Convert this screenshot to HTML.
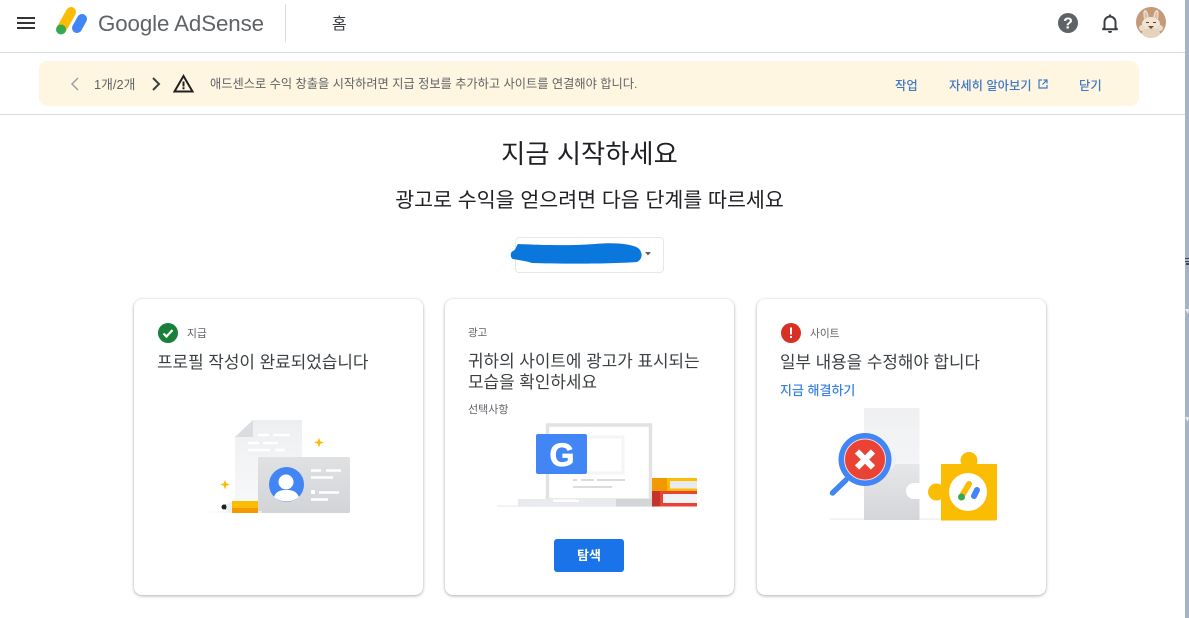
<!DOCTYPE html>
<html lang="ko"><head><meta charset="utf-8"><title>Google AdSense</title>
<style>
html,body{margin:0;padding:0;background:#fff}
body{width:1189px;height:618px;position:relative;overflow:hidden;font-family:"Liberation Sans","Noto Sans CJK KR",sans-serif;color:#3c4043;filter:blur(.3px)}
.a{position:absolute;white-space:nowrap}
.card{position:absolute;top:299px;width:289px;height:296px;background:#fff;border-radius:8px;box-shadow:0 1px 3px rgba(60,64,67,.4),0 0 1px rgba(60,64,67,.15)}
.link{color:#1a73e8;font-weight:500}
svg{position:absolute;overflow:visible}
</style></head><body>
<div class="a" style="left:1185px;top:0;width:4px;height:618px;background:#a3b4c8"></div>
<svg style="left:1185px;top:258px" width="4" height="170"><path d="M0 0h4v1H0zM0 3h4v1H0zM1 5h3v2H1z" fill="#3c4654"/><path d="M0 51h4L3 56zM0 159h4L3 164z" fill="#e8edf2"/></svg>
<div class="a" style="left:0;top:52px;width:1185px;height:1px;background:#dadce0"></div>
<div class="a" style="left:0;top:114px;width:1185px;height:1px;background:#dadce0"></div>
<svg style="left:17px;top:16px" width="18" height="14"><path d="M0 1h18v2H0zM0 6h18v2H0zM0 11h18v2H0z" fill="#333"/></svg>
<svg style="left:56px;top:7px" width="32" height="28" viewBox="0 0 32 28"><path d="M5.500 22 15 5" stroke="#fbbc04" stroke-width="10" stroke-linecap="round"/><path d="M21 21 26 12" stroke="#4285f4" stroke-width="10" stroke-linecap="round"/><circle cx="5" cy="22.500" r="5" fill="#34a853"/></svg>
<div class="a" style="left:98px;top:10px;font-size:22.300px;line-height:28px;color:#5f6368;letter-spacing:-.1px">Google AdSense</div>
<div class="a" style="left:285px;top:4px;width:1px;height:38px;background:#dadce0"></div>
<div class="a" style="left:332px;top:14px;font-size:16px;line-height:22px;color:#3c4043">홈</div>
<svg style="left:1058px;top:13px" width="20" height="20"><circle cx="10" cy="10" r="10" fill="#5f6368"/><text x="10" y="15.500" font-size="16" font-weight="700" text-anchor="middle" fill="#fff" font-family="Liberation Sans">?</text></svg>
<svg style="left:1101px;top:13px" width="18" height="20" viewBox="0 0 18 20"><path d="M3.500 15V9a5.500 5.500 0 0 1 11 0v6l1.500 1.200H2z" fill="none" stroke="#3c4043" stroke-width="2" stroke-linejoin="round"/><path d="M7 18h4a2 2 0 0 1-4 0zM8 1.500h2V4H8z" fill="#3c4043"/></svg>
<svg style="left:1136px;top:7px" width="30" height="30" viewBox="0 0 30 30"><circle cx="15" cy="15" r="15" fill="#c49a78"/><path d="M9 3c2.500 0 3.500 5 4 9H8C7 8 7 3 9 3zM21 3c-2.500 0-3.500 5-4 9h5C23 8 23 3 21 3z" fill="#eadccb"/><path d="M9.500 5c1 0 1.500 3 2 7h-2.500C8.500 9 8.500 5 9.500 5zM20.500 5c-1 0-1.500 3-2 7H21C21.500 9 21.500 5 20.500 5z" fill="#e3b9a8"/><ellipse cx="15" cy="17" rx="9" ry="7" fill="#f0e4d4"/><ellipse cx="15" cy="26" rx="9" ry="5" fill="#e6d3bb"/><circle cx="6" cy="21" r="3" fill="#eadccb"/><circle cx="24" cy="21" r="3" fill="#eadccb"/><path d="M12 19h6l-3 3z" fill="#7d4a36"/><path d="M10 15.500h3M17 15.500h3" stroke="#5c4033" stroke-width="1"/></svg>

<div class="a" style="left:39px;top:61px;width:1100px;height:45px;background:#fef6e0;border-radius:8px"></div>
<svg style="left:70px;top:77px" width="9" height="14"><path d="M8 1 2 7l6 6" fill="none" stroke="#9aa0a6" stroke-width="1.500"/></svg>
<div class="a" style="left:94px;top:76px;font-size:12.800px;line-height:18px;color:#5f6368">1개/2개</div>
<svg style="left:152px;top:77px" width="9" height="14"><path d="M1 1l6 6-6 6" fill="none" stroke="#3c4043" stroke-width="2"/></svg>
<svg style="left:173px;top:74px" width="21" height="19"><path d="M10.500 2 19.500 17.500H1.500z" fill="none" stroke="#202124" stroke-width="2" stroke-linejoin="miter"/><path d="M9.500 7.500h2v5h-2zM9.500 13.300h2v2h-2z" fill="#202124"/></svg>
<div class="a" style="left:210px;top:75px;font-size:12.230px;line-height:18px;color:#5f6368">애드센스로 수익 창출을 시작하려면 지급 정보를 추가하고 사이트를 연결해야 합니다.</div>
<div class="a link" style="left:895px;top:77px;font-size:12.300px;line-height:18px;color:#3f78c9">작업</div>
<div class="a link" style="left:949px;top:77px;font-size:12.300px;line-height:18px;color:#3f78c9">자세히 알아보기</div>
<svg style="left:1038px;top:79px" width="10" height="10"><path d="M4 1H1v8h8V6M5.500 1H9v3.500M9 1 4.500 5.500" fill="none" stroke="#3f78c9" stroke-width="1.200"/></svg>
<div class="a link" style="left:1079px;top:77px;font-size:12.300px;line-height:18px;color:#3f78c9">닫기</div>

<div class="a" style="left:0;width:1179px;top:136px;text-align:center;font-size:26.300px;line-height:36px;color:#202124">지금 시작하세요</div>
<div class="a" style="left:0;width:1179px;top:186px;text-align:center;font-size:20.600px;line-height:30px;color:#202124">광고로 수익을 얻으려면 다음 단계를 따르세요</div>

<div class="a" style="left:515px;top:237px;width:147px;height:34px;border:1px solid #e6e7e9;border-radius:4px"></div>
<svg style="left:510px;top:241px" width="135" height="24"><path d="M8 3C30 4 60 5 85 3 105 1 122 3 128 7 133 11 133 18 127 21 100 23 50 23 22 22 16 20 8 19 3 18 0 17 0 11 3 10 6 9 6 5 8 3z" fill="#0a77dc"/></svg>
<svg style="left:645px;top:252px" width="6" height="4"><path d="M0 0h6L3 3.500z" fill="#5f6368"/></svg>

<!-- Card 1 -->
<div class="card" style="left:134px"></div>
<svg style="left:158px;top:323px" width="20" height="20"><circle cx="10" cy="10" r="10" fill="#188038"/><path d="M5.500 10.500 8.500 13.500 14.500 7" fill="none" stroke="#fff" stroke-width="2.200"/></svg>
<div class="a" style="left:187px;top:326px;font-size:10.800px;line-height:16px;color:#5f6368">지급</div>
<div class="a" style="left:157px;top:352px;font-size:16.900px;line-height:22px;color:#3c4043">프로필 작성이 완료되었습니다</div>
<svg style="left:200px;top:415px" width="160" height="105" viewBox="200 415 160 105">
<defs><linearGradient id="g1" x1="0" y1="0" x2="0" y2="1"><stop offset="0" stop-color="#eeeff0"/><stop offset="1" stop-color="#f8f9fa"/></linearGradient>
<linearGradient id="g2" x1="0" y1="0" x2="0" y2="1"><stop offset="0" stop-color="#dfe1e3"/><stop offset="1" stop-color="#d2d4d7"/></linearGradient>
<linearGradient id="g3" x1="0" y1="0" x2="1" y2="0"><stop offset="0" stop-color="#fff"/><stop offset="1" stop-color="#e8eaed"/></linearGradient></defs>
<path d="M253 420h49v50h-44v42h-23V437z" fill="url(#g1)"/>
<path d="M253 420v17h-18z" fill="#dadce0"/>
<path d="M258 435h11M273 435h17M248 443h11M263 443h15M248 450h22M275 450h10" stroke="#fff" stroke-width="2.500"/>
<rect x="258" y="457" width="92" height="56" rx="1.500" fill="url(#g2)"/>
<circle cx="286.500" cy="484.500" r="17.500" fill="#4285f4"/>
<circle cx="286" cy="482" r="7.500" fill="#fff"/>
<path d="M274 497c2-6 7-7 12.500-7s10 1 12.500 7c-3 2.500-7.500 4.500-12.500 4.500S277 499.500 274 497z" fill="#fff"/>
<path d="M311 470.500h10M326 470.500h15M311 477.500h22M319 492.500h20M311 499.500h17" stroke="#fff" stroke-width="2.500"/><rect x="311" y="490" width="4" height="4" fill="#fff"/>
<rect x="204" y="511" width="58" height="2" fill="url(#g3)"/>
<path d="M232 501h26v12h-26z" fill="#fbbc04"/><path d="M232 508h26v5h-26z" fill="#f29900"/>
<path d="M232 501v12l-10-6z" fill="#eceef0"/><path d="M222 507l4-2.800v5.600z" fill="#202124"/><circle cx="224" cy="507" r="2.500" fill="#202124"/>
<path d="M319 438l1.300 3.200 3.700 1.300-3.700 1.300-1.300 3.700-1.300-3.700-3.700-1.300 3.700-1.300zM225 480l1.300 3.200 3.700 1.300-3.700 1.300-1.300 3.700-1.300-3.700-3.700-1.300 3.700-1.300z" fill="#fbbc04"/>
</svg>

<!-- Card 2 -->
<div class="card" style="left:445px"></div>
<div class="a" style="left:468px;top:325px;font-size:10.500px;line-height:16px;color:#5f6368">광고</div>
<div class="a" style="left:468px;top:350px;font-size:16.900px;line-height:23px;color:#3c4043">귀하의 사이트에 광고가 표시되는</div>
<div class="a" style="left:468px;top:371px;font-size:16.900px;line-height:23px;color:#3c4043">모습을 확인하세요</div>
<div class="a" style="left:468px;top:402px;font-size:11px;line-height:16px;color:#5f6368">선택사항</div>
<svg style="left:490px;top:415px" width="215" height="95" viewBox="490 415 215 95">
<rect x="497" y="505" width="160" height="2" fill="#f1f3f4"/>
<rect x="547.500" y="425" width="103" height="75" fill="#fff" stroke="#e0e2e4" stroke-width="3.500"/>
<rect x="566" y="437" width="57" height="36" fill="none" stroke="#f4f5f6" stroke-width="3"/>
<rect x="518" y="499" width="98" height="7.500" fill="#e8eaed"/><rect x="553" y="499.500" width="26" height="2.500" fill="#fff"/>
<rect x="616" y="499" width="36" height="7.500" fill="#d3d5d8"/>
<rect x="536" y="434" width="51" height="40" rx="2" fill="#4285f4"/>
<text x="562" y="466" text-anchor="middle" font-size="32" font-weight="700" fill="#fff" stroke="#fff" stroke-width=".8" font-family="Liberation Sans">G</text>
<path d="M573 480h4M581 480h13M597 480h28M573 487h39" stroke="#dadce0" stroke-width="2"/>
<rect x="652" y="478" width="45" height="13" fill="#fbbc04"/><rect x="652" y="478" width="15" height="13" fill="#f29900"/><rect x="670" y="481" width="27" height="7.500" fill="#e8eaed"/>
<rect x="652" y="491" width="45" height="15.500" fill="#ea4335"/><rect x="652" y="491" width="8" height="15.500" fill="#c5342a"/><rect x="663" y="494" width="34" height="9" fill="#f1f3f4"/>
</svg>
<div class="a" style="left:554px;top:539px;width:70px;height:33px;background:#1a73e8;border-radius:3px;color:#fff;font-size:13px;font-weight:700;line-height:33px;text-align:center">탐색</div>

<!-- Card 3 -->
<div class="card" style="left:757px"></div>
<svg style="left:781px;top:323px" width="20" height="20"><circle cx="10" cy="10" r="10" fill="#d93025"/><path d="M9 4.500h2v7H9zM9 13h2v2H9z" fill="#fff"/></svg>
<div class="a" style="left:810px;top:326px;font-size:10.700px;line-height:16px;color:#5f6368">사이트</div>
<div class="a" style="left:780px;top:352px;font-size:16.850px;line-height:22px;color:#3c4043">일부 내용을 수정해야 합니다</div>
<div class="a" style="left:780px;top:382px;font-size:13px;line-height:18px;font-weight:500;color:#3b82e8">지금 해결하기</div>
<svg style="left:825px;top:405px" width="180" height="120" viewBox="825 405 180 120">
<defs><linearGradient id="g4" x1="0" y1="0" x2="0" y2="1"><stop offset="0" stop-color="#eff0f1"/><stop offset="1" stop-color="#f4f5f6"/></linearGradient>
<linearGradient id="g5" x1="0" y1="0" x2="0" y2="1"><stop offset="0" stop-color="#e6e7e9"/><stop offset="1" stop-color="#d3d5d8"/></linearGradient></defs>
<rect x="830" y="518" width="164" height="2" fill="#f1f3f4"/>
<rect x="864" y="464" width="55.500" height="56" fill="url(#g5)"/>
<rect x="864" y="408" width="55.500" height="56" fill="url(#g4)"/>
<circle cx="885" cy="460" r="11" fill="#eff0f1"/>
<circle cx="914" cy="491" r="8" fill="#fff"/><rect x="914" y="483" width="8" height="16" fill="#fff"/>
<circle cx="969" cy="460.500" r="8.500" fill="#fbbc04"/>
<circle cx="936.500" cy="492" r="8.500" fill="#fbbc04"/>
<path d="M941 464h56v55a1.500 1.500 0 0 1-1.500 1.500H941z" fill="#fbbc04"/>
<circle cx="968" cy="492" r="19" fill="#fff"/>
<path d="M963 494 969 484" stroke="#fbbc04" stroke-width="6" stroke-linecap="round"/>
<path d="M974 496 977 490" stroke="#4285f4" stroke-width="6" stroke-linecap="round"/>
<circle cx="961.500" cy="497" r="3.500" fill="#34a853"/>
<path d="M832.500 493 846 480" stroke="#4285f4" stroke-width="5.500" stroke-linecap="round"/>
<circle cx="865" cy="459.500" r="26.500" fill="#4285f4"/>
<circle cx="865" cy="459.500" r="20.500" fill="#ea4335" stroke="#f1d9d6" stroke-width="1"/>
<path d="M857 451.500l16 16M873 451.500l-16 16" stroke="#fff" stroke-width="6"/>
</svg>
</body></html>
